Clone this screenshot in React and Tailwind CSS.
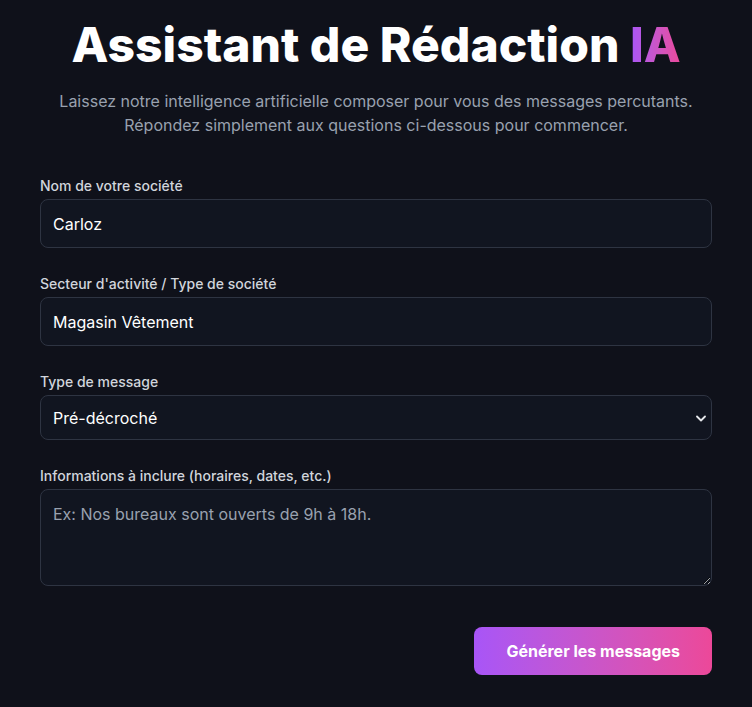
import React, { useState } from 'react';

export default function App() {
  const [company, setCompany] = useState('Carloz');
  const [sector, setSector] = useState('Magasin Vêtement');
  const [type, setType] = useState('pre');
  const [info, setInfo] = useState('');

  const inputCls =
    'block w-full rounded-lg border border-[#2e3442] bg-[#111520] text-base text-white outline-none focus:border-purple-500';

  return (
    <div className="min-h-screen bg-[#0f111a] font-['Inter','Liberation_Sans',sans-serif] [color-scheme:dark]">
      <div className="mx-auto max-w-2xl pt-[17px] pb-8">
        <div className="text-center">
          <h1 className="text-5xl font-extrabold text-white leading-[56px]">
            Assistant de Rédaction{' '}
            <span className="bg-gradient-to-r from-[#a855f7] to-[#ec4899] bg-clip-text text-transparent">IA</span>
          </h1>
          <p className="mt-[16px] text-base leading-6 text-gray-400">
            Laissez notre intelligence artificielle composer pour vous des messages percutants.
            <br />
            Répondez simplement aux questions ci-dessous pour commencer.
          </p>
        </div>

        <form className="mt-[39px] flex flex-col gap-[26px]" onSubmit={e => e.preventDefault()}>
          <div>
            <label className="mb-[3px] block text-sm font-medium text-gray-300">Nom de votre société</label>
            <input className={`${inputCls} h-[49px] px-3`} value={company} onChange={e => setCompany(e.target.value)} />
          </div>
          <div>
            <label className="mb-[3px] block text-sm font-medium text-gray-300">Secteur d'activité / Type de société</label>
            <input className={`${inputCls} h-[49px] px-3`} value={sector} onChange={e => setSector(e.target.value)} />
          </div>
          <div>
            <label className="mb-[3px] block text-sm font-medium text-gray-300">Type de message</label>
            <div className="relative">
              <select
                className={`${inputCls} h-[45px] appearance-none pl-3 pr-8`}
                value={type}
                onChange={e => setType(e.target.value)}
              >
                <option value="pre">Pré-décroché</option>
                <option value="attente">Attente</option>
                <option value="repondeur">Répondeur</option>
              </select>
              {/* chevron like the native one */}
              <svg
                className="pointer-events-none absolute right-[6px] top-[20px]"
                width="10"
                height="7"
                viewBox="0 0 10 7"
                fill="none"
              >
                <polyline points="1,1.5 5,5.5 9,1.5" stroke="#e5e7eb" strokeWidth="1.8" strokeLinecap="round" strokeLinejoin="round" />
              </svg>
            </div>
          </div>
          <div>
            <label className="mb-[3px] block text-sm font-medium text-gray-300">Informations à inclure (horaires, dates, etc.)</label>
            <textarea
              rows={3}
              className={`${inputCls} h-[97px] px-3 py-3 placeholder:text-gray-400`}
              placeholder="Ex: Nos bureaux sont ouverts de 9h à 18h."
              value={info}
              onChange={e => setInfo(e.target.value)}
            />
          </div>
          <div className="mt-[15px] flex justify-end">
            <button
              type="submit"
              className="h-12 rounded-lg bg-gradient-to-r from-[#a855f7] to-[#ec4899] px-8 text-base font-bold text-white"
            >
              Générer les messages
            </button>
          </div>
        </form>
      </div>
    </div>
  );
}
